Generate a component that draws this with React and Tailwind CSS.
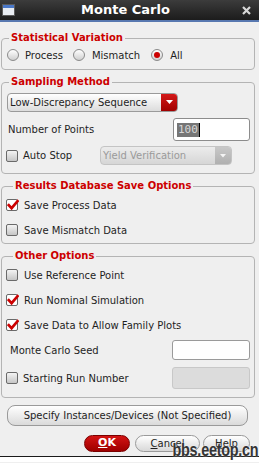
import React from 'react';

const Radio = ({ checked }) => (
  <span className="w-[12px] h-[12px] rounded-full border border-[#8a8a8a] bg-linear-to-b from-white to-[#cfcfcf] flex items-center justify-center shrink-0">
    {checked && <span className="w-[6px] h-[6px] rounded-full bg-[#cc0000]" />}
  </span>
);

const Check = ({ checked }) =>
  checked ? (
    <span className="relative w-[12px] h-[12px] border border-[#6a6a6a] bg-white rounded-[2px] shrink-0">
      <svg className="absolute left-[0px] top-[-1px]" width="12" height="12" viewBox="0 0 12 12">
        <path d="M1.8 6.2 L4.6 9.2 L10.6 2.2" fill="none" stroke="#cc0000" strokeWidth="2.6" strokeLinecap="square" />
      </svg>
    </span>
  ) : (
    <span className="w-[12px] h-[12px] border border-[#6a6a6a] bg-linear-to-b from-[#f4f4f4] to-[#c6c6c6] rounded-[2px] shrink-0" />
  );

const Group = ({ title, className, children }) => (
  <fieldset className={`border border-[#b4b4b4] rounded-[4px] ml-[1px] mr-[4px] ${className}`}>
    <legend className="ml-[7px] px-[2px] text-[10px] leading-[12px] font-bold text-[#cc0000]">{title}</legend>
    {children}
  </fieldset>
);

const CheckRow = ({ checked, label, className = '' }) => (
  <div className={`h-[20px] flex items-center gap-[6px] ${className}`}>
    <Check checked={checked} />
    <span>{label}</span>
  </div>
);

export default function App() {
  return (
    <div className="relative w-[259px] h-[463px] overflow-hidden bg-[#efefef] font-['DejaVu_Sans',sans-serif] text-[10px] text-[#1e1e1e]">
      {/* title bar */}
      <div className="h-[20px] bg-linear-to-b from-[#3c3c3c] to-[#1c1c1c] flex items-center relative">
        <div className="ml-[2px] w-[13px] h-[12px] bg-[#e8ecf2] border border-[#5b5b5b] flex flex-col">
          <div className="h-[3px] bg-[#4a78c8]" />
        </div>
        <div className="flex-1 text-center text-white font-bold text-[13px] leading-[20px] pr-[6px]">Monte Carlo</div>
        <svg className="mr-[8px]" width="9" height="9" viewBox="0 0 9 9">
          <path d="M1 1 L8 8 M8 1 L1 8" stroke="#d8d8d8" strokeWidth="2.2" />
        </svg>
      </div>
      <div className="h-[2px] bg-[#5878b0]" />

      <Group title="Statistical Variation" className="mt-[10px] pb-[4px]">
        <div className="h-[20px] mt-[1px] pl-[5px] flex items-center">
          <Radio />
          <span className="ml-[6px]">Process</span>
          <span className="ml-[10px]"><Radio /></span>
          <span className="ml-[7px]">Mismatch</span>
          <span className="ml-[11px]"><Radio checked /></span>
          <span className="ml-[7px]">All</span>
        </div>
      </Group>

      <Group title="Sampling Method" className="mt-[6px] pb-[8px]">
        <div className="mt-[5px] ml-[5px] w-[171px] h-[19px] flex rounded-[4px] border border-[#9a9a9a] bg-linear-to-b from-white to-[#dcdcdc] overflow-hidden">
          <span className="flex-1 pl-[2px] leading-[17px]">Low-Discrepancy Sequence</span>
          <span className="w-[16px] bg-linear-to-b from-[#d41818] to-[#a00000] flex items-center justify-center">
            <svg width="7" height="5" viewBox="0 0 7 5"><path d="M0 0 H7 L3.5 4 Z" fill="#fff" /></svg>
          </span>
        </div>
        <div className="mt-[6px] h-[23px] flex items-center pl-[6px] pr-[4px]">
          <span className="flex-1">Number of Points</span>
          <div className="w-[77px] h-[23px] border border-[#8c8c8c] rounded-[3px] bg-white flex items-center pl-[3px]">
            <span className="bg-[#767676] text-[#d8d8d8] font-['DejaVu_Sans_Mono',monospace] text-[11px] leading-[14px] px-[1px]">100</span>
            <span className="w-[1px] h-[14px] bg-black" />
          </div>
        </div>
        <div className="mt-[5px] h-[19px] flex items-center pl-[4px]">
          <Check />
          <span className="ml-[5px] w-[77px]">Auto Stop</span>
          <div className="w-[132px] h-[19px] flex rounded-[4px] border border-[#c4c4c4] bg-linear-to-b from-[#ececec] to-[#d6d6d6] overflow-hidden">
            <span className="flex-1 pl-[2px] leading-[17px] text-[#9a9a9a]">Yield Verification</span>
            <span className="w-[16px] bg-linear-to-b from-[#c8c8c8] to-[#b0b0b0] flex items-center justify-center">
              <svg width="6" height="4" viewBox="0 0 6 4"><path d="M0 0 H6 L3 3.5 Z" fill="#f4f4f4" /></svg>
            </span>
          </div>
        </div>
      </Group>

      <Group title="Results Database Save Options" className="mt-[6px] pb-[3px] pl-[4px]">
        <CheckRow checked label="Save Process Data" className="mt-[3px]" />
        <CheckRow label="Save Mismatch Data" className="mt-[5px]" />
      </Group>

      <Group title="Other Options" className="mt-[6px] pb-[8px] pl-[4px]">
        <CheckRow label="Use Reference Point" className="mt-[3px]" />
        <CheckRow checked label="Run Nominal Simulation" className="mt-[5px]" />
        <CheckRow checked label="Save Data to Allow Family Plots" className="mt-[5px]" />
        <div className="mt-[5px] h-[20px] flex items-center pr-[4px]">
          <span className="flex-1 pl-[4px]">Monte Carlo Seed</span>
          <div className="w-[78px] h-[20px] border border-[#9a9a9a] rounded-[3px] bg-white" />
        </div>
        <div className="mt-[7px] h-[22px] flex items-center pr-[4px]">
          <Check />
          <span className="flex-1 ml-[5px]">Starting Run Number</span>
          <div className="w-[78px] h-[22px] border border-[#c8c8c8] rounded-[3px] bg-[#dcdcdc]" />
        </div>
      </Group>

      <div className="mt-[7px] ml-[7px] mr-[11px] h-[21px] rounded-[8px] border border-[#9a9a9a] bg-linear-to-b from-white to-[#dadada] flex items-center justify-center">
        Specify Instances/Devices (Not Specified)
      </div>

      <div className="mt-[9px] h-[17px] flex justify-end pr-[9px]">
        <div className="w-[46px] rounded-full bg-linear-to-b from-[#d41414] to-[#9e0000] border border-[#7a0000] flex items-center justify-center text-white font-bold text-[11px]">
          <span><span className="underline">O</span>K</span>
        </div>
        <div className="ml-[5px] w-[65px] rounded-full bg-linear-to-b from-white to-[#d8d8d8] border border-[#9a9a9a] flex items-center justify-center">
          <span><span className="underline">C</span>ancel</span>
        </div>
        <div className="ml-[3px] w-[47px] rounded-full bg-linear-to-b from-white to-[#d8d8d8] border border-[#9a9a9a] flex items-center justify-center">
          <span><span className="underline">H</span>elp</span>
        </div>
      </div>

      <div className="mt-[4px] h-[1px] bg-[#1a1a1a]" />
      <div className="h-[5px] bg-white" />

      {/* watermark */}
      <div className="absolute right-[1px] bottom-[5px] origin-right scale-x-[0.8] font-['Liberation_Sans',sans-serif] font-bold text-[18px] leading-[16px] tracking-[-0.3px] text-[#353535] [text-shadow:0_0_2px_#fff]">
        bbs.eetop.cn
      </div>
    </div>
  );
}
